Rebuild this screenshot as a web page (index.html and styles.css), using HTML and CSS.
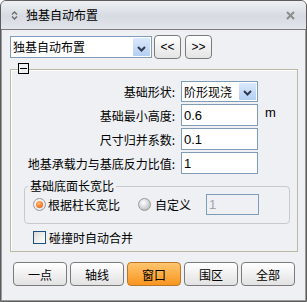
FILE: index.html
```html
<!DOCTYPE html>
<html lang="zh-CN">
<head>
  <meta charset="UTF-8">
  <meta name="viewport" content="width=device-width, initial-scale=1.0">
  <title>独基自动布置</title>
  <link rel="stylesheet" href="styles.css">
</head>
<body>
  <div class="window">
    <div class="titlebar">
      <svg class="title-icon" width="7" height="9" viewBox="0 0 7 9">
        <path d="M1 3.5 L3.5 1 L6 3.5 M1 5.5 L3.5 8 L6 5.5" fill="none" stroke="#6b6b6b" stroke-width="1.4"/>
      </svg>
      <span class="title">独基自动布置</span>
      <svg class="close-icon" width="9" height="9" viewBox="0 0 9 9">
        <path d="M1 1 L8 8 M8 1 L1 8" stroke="#8c8c8c" stroke-width="2"/>
      </svg>
    </div>

    <div class="content">
      <div class="toolbar">
        <div class="combo combo-wide">
          <span class="combo-text">独基自动布置</span>
          <span class="drop-btn">
            <svg width="9" height="6" viewBox="0 0 9 6"><path d="M1 1 L4.5 4.5 L8 1" fill="none" stroke="#2f3a52" stroke-width="2"/></svg>
          </span>
        </div>
        <button class="nav-btn">&lt;&lt;</button>
        <button class="nav-btn">&gt;&gt;</button>
      </div>

      <div class="group">
        <span class="collapse"></span>

        <div class="form-row">
          <label>基础形状:</label>
          <div class="combo combo-small">
            <span class="combo-text">阶形现浇</span>
            <span class="drop-btn">
              <svg width="9" height="6" viewBox="0 0 9 6"><path d="M1 1 L4.5 4.5 L8 1" fill="none" stroke="#2f3a52" stroke-width="2"/></svg>
            </span>
          </div>
        </div>
        <div class="form-row">
          <label>基础最小高度:</label>
          <input class="field" type="text" value="0.6">
          <span class="unit">m</span>
        </div>
        <div class="form-row">
          <label>尺寸归并系数:</label>
          <input class="field" type="text" value="0.1">
        </div>
        <div class="form-row">
          <label>地基承载力与基底反力比值:</label>
          <input class="field" type="text" value="1">
        </div>

        <fieldset class="subgroup">
          <legend>基础底面长宽比</legend>
          <div class="radio-row">
            <span class="radio checked"></span>
            <span class="radio-label">根据柱长宽比</span>
            <span class="radio"></span>
            <span class="radio-label">自定义</span>
            <input class="field field-disabled" type="text" value="1" disabled>
          </div>
        </fieldset>

        <div class="check-row">
          <span class="checkbox"></span>
          <span>碰撞时自动合并</span>
        </div>
      </div>

      <div class="actions">
        <button class="btn">一点</button>
        <button class="btn">轴线</button>
        <button class="btn btn-active">窗口</button>
        <button class="btn">围区</button>
        <button class="btn">全部</button>
      </div>
    </div>
  </div>
</body>
</html>
```

FILE: styles.css
```css
body {
  margin: 0;
  padding: 0;
  font-family: "Noto Sans CJK SC", "Liberation Sans", sans-serif;
  font-size: 12px;
  color: #000;
  background-color: #ffffff;
}

.window {
  box-sizing: border-box;
  width: 307px;
  height: 302px;
  border: 1px solid #5c5c5c;
  border-radius: 6px 6px 0 0;
  box-shadow: inset 1px 0 0 #9a9a9a, inset -1px 0 0 #9a9a9a, inset 0 -1px 0 #9a9a9a;
  background-color: #eef0f4;
  display: flex;
  flex-direction: column;
  overflow: hidden;
}

.titlebar {
  height: 28px;
  flex: none;
  display: flex;
  align-items: center;
  padding: 0 10px 0 10px;
  background: linear-gradient(#eef0f3, #d6dae1 55%, #e3e6ec);
  border-bottom: 1px solid #7b7b7b;
}

.title-icon {
  margin-right: 8px;
}

.title {
  flex: 1;
  font-size: 12px;
  line-height: 14px;
}

.close-icon {
  margin-right: 1px;
}

.content {
  flex: 1;
  padding: 5px 8px 0 9px;
  display: flex;
  flex-direction: column;
}

.toolbar {
  display: flex;
  align-items: center;
  gap: 2px;
}

.combo {
  box-sizing: border-box;
  display: flex;
  align-items: stretch;
  border: 1px solid #7f9db9;
  background-color: #fff;
}

.combo-wide {
  width: 142px;
  height: 22px;
}

.combo-small {
  width: 77px;
  height: 21px;
}

.combo-text {
  flex: 1;
  padding-left: 2px;
  line-height: 20px;
  font-size: 12px;
}

.combo-small .combo-text {
  line-height: 19px;
}

.drop-btn {
  width: 17px;
  margin: 1px;
  display: flex;
  align-items: center;
  justify-content: center;
  background: linear-gradient(#dbe8fb, #b3cff4);
  border-radius: 1px;
}

.drop-btn svg {
  margin-top: 3px;
}

.nav-btn {
  box-sizing: border-box;
  width: 27px;
  height: 24px;
  padding: 0;
  border: 1px solid #7b7b7b;
  border-radius: 4px;
  background: linear-gradient(#ffffff, #e4e4e4);
  font-family: "Liberation Sans", sans-serif;
  font-size: 12px;
  color: #000;
}

.nav-btn + .nav-btn {
  margin-left: 2px;
}

.group {
  position: relative;
  margin-top: 10px;
  padding: 10px 0 7px 0;
  border: 1px solid #bdb6a2;
  box-shadow: inset 1px 1px 0 #ffffff;
  display: flex;
  flex-direction: column;
  gap: 2px;
}

.collapse {
  position: absolute;
  top: -7px;
  left: 7px;
  box-sizing: border-box;
  width: 11px;
  height: 11px;
  border: 1px solid #000;
  background-color: #eef0f4;
}

.collapse::after {
  content: "";
  position: absolute;
  left: 1px;
  right: 1px;
  top: 4px;
  height: 1px;
  background-color: #000;
}

.form-row {
  display: flex;
  align-items: center;
  height: 22px;
}

.form-row label {
  width: 164px;
  text-align: right;
  margin-right: 6px;
}

.field {
  box-sizing: border-box;
  width: 77px;
  height: 22px;
  margin: 0;
  padding: 0 2px;
  border: 1px solid #7f9db9;
  background-color: #fff;
  font-family: "Liberation Sans", sans-serif;
  font-size: 13px;
  color: #000;
  outline: none;
}

.unit {
  margin-left: 7px;
  margin-top: -5px;
  font-family: "Liberation Sans", sans-serif;
  font-size: 13px;
}

.subgroup {
  margin: 3px 7px 0 13px;
  padding: 1px 3px 8px 3px;
  border: 1px solid #c7c9ce;
  border-radius: 4px;
}

.subgroup legend {
  padding: 0 2px;
  line-height: 14px;
}

.radio-row {
  display: flex;
  align-items: center;
  height: 21px;
  padding-left: 5px;
}

.radio {
  box-sizing: border-box;
  width: 13px;
  height: 13px;
  border-radius: 50%;
  border: 1px solid #9a9a9a;
  background: radial-gradient(circle at 40% 35%, #ffffff, #d0d2d6 55%, #9ea2aa);
  position: relative;
}

.radio.checked {
  background: radial-gradient(circle at 40% 35%, #ffffff, #e6e7ea 70%, #b8bbc2);
}

.radio.checked::after {
  content: "";
  position: absolute;
  left: 2px;
  top: 2px;
  width: 7px;
  height: 7px;
  border-radius: 50%;
  background: radial-gradient(circle at 40% 35%, #ffc07a, #f26a1b 70%, #d9530f);
}

.radio-label {
  margin-left: 2px;
  margin-right: 18px;
}

.radio-label + .radio + .radio-label {
  margin-left: 4px;
  margin-right: 15px;
}

.field-disabled {
  width: 53px;
  height: 21px;
  background-color: #eef0f4;
  color: #a3a3a3;
}

.check-row {
  display: flex;
  align-items: center;
  gap: 3px;
  margin: 4px 0 0 22px;
  height: 14px;
}

.checkbox {
  box-sizing: border-box;
  width: 13px;
  height: 13px;
  border: 1px solid #1c5180;
  background: linear-gradient(135deg, #dcdcd6, #ffffff);
}

.actions {
  display: flex;
  gap: 3px;
  margin-top: 10px;
  padding-left: 3px;
}

.btn {
  box-sizing: border-box;
  width: 54px;
  height: 24px;
  padding: 0;
  border: 1px solid #7b7b7b;
  border-radius: 4px;
  background: linear-gradient(#ffffff, #e2e2e2);
  font-family: "Noto Sans CJK SC", sans-serif;
  font-size: 12px;
  color: #000;
}

.btn-active {
  border-color: #b8772a;
  background: linear-gradient(#ffc56e, #f8951f);
}
```
